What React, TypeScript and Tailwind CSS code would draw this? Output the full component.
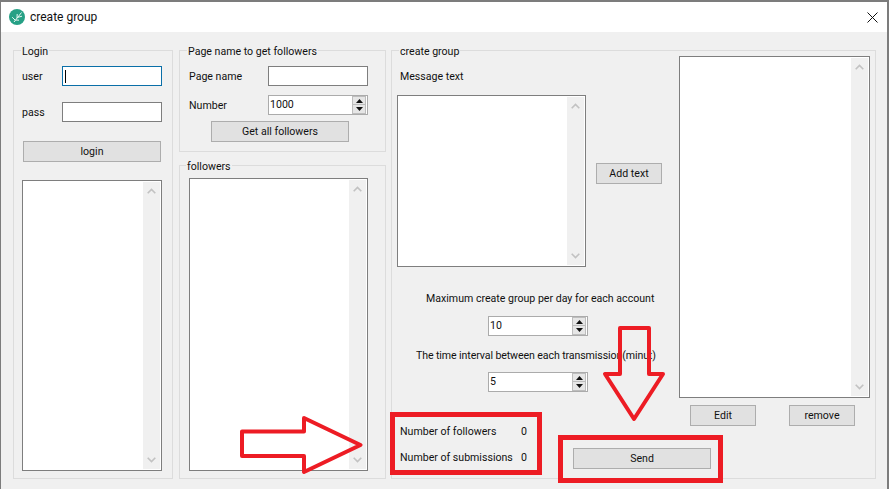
import React from "react";

const FONT = "font-['Roboto','Liberation_Sans',Arial,sans-serif]";

function Chevron({ up }: { up?: boolean }) {
  return (
    <svg width="9" height="6" viewBox="0 0 9 6" fill="none" stroke="#c2c2c2" strokeWidth="1.6">
      <path d={up ? "M0.7 5.2 L4.5 1.4 L8.3 5.2" : "M0.7 0.8 L4.5 4.6 L8.3 0.8"} />
    </svg>
  );
}

function ListBox({ className }: { className: string }) {
  return (
    <div className={`flex justify-end border border-[#7e7e7e] bg-white pt-px pr-px pb-px ${className}`}>
      <div className="flex w-[17px] flex-col items-center justify-between bg-[#f0f0f0] pt-[6px] pb-[6px]">
        <Chevron up />
        <Chevron />
      </div>
    </div>
  );
}

function Btn({ label, className }: { label: string; className: string }) {
  return (
    <div className={`flex h-[21px] shrink-0 items-center justify-center border border-[#adadad] bg-[#e1e1e1] pt-px text-[#111] ${className}`}>
      {label}
    </div>
  );
}

function TextInput({ focused }: { focused?: boolean }) {
  return (
    <div className={`flex h-[20px] w-[100px] shrink-0 items-center border bg-white pl-[2px] ${focused ? "border-[#0a6fa8]" : "border-[#7e7e7e]"}`}>
      {focused && <div className="h-[13px] w-px bg-black" />}
    </div>
  );
}

function Spinner({ value }: { value: string }) {
  return (
    <div className="flex h-[20px] w-[100px] shrink-0 items-center justify-between border border-[#ababab] bg-white pr-[1px] pl-[1px] text-[#111]">
      <span>{value}</span>
      <div className="flex w-[14px] flex-col">
        <div className="flex h-[9px] items-center justify-center border border-[#bdbdbd] bg-[#e6e6e6]">
          <svg width="7" height="4" viewBox="0 0 7 4"><path d="M3.5 0 L7 4 L0 4 Z" fill="#111" /></svg>
        </div>
        <div className="flex h-[9px] items-center justify-center border border-t-0 border-[#bdbdbd] bg-[#e6e6e6]">
          <svg width="7" height="4" viewBox="0 0 7 4"><path d="M0 0 L7 0 L3.5 4 Z" fill="#111" /></svg>
        </div>
      </div>
    </div>
  );
}

function Legend({ text, className }: { text: string; className: string }) {
  return (
    <span className={`absolute top-[-6px] bg-[#f0f0f0] px-[1px] leading-[13px] text-[#111] ${className}`}>{text}</span>
  );
}

function Label({ text, className = "" }: { text: string; className?: string }) {
  return <span className={`pt-px leading-[13px] text-[#111] ${className}`}>{text}</span>;
}

export default function App() {
  return (
    <div className={`relative flex h-[489px] w-[889px] flex-col overflow-hidden border-t-2 border-r-2 border-l border-[#7c7c7c] bg-[#f0f0f0] text-[10.6px] ${FONT}`}>
      <div className="flex h-[30px] shrink-0 items-center bg-white pr-[9px] pl-[8px]">
        <svg width="16" height="16" viewBox="0 0 16 16">
          <circle cx="8" cy="8" r="8" fill="#26a085" />
          <path d="M5 13 L12.5 3.5 M8 9.2 L8.2 5 M8.6 8.4 L13 7.2 M6.3 11.3 L3.2 8.2 M6.6 11 L10 11.2" stroke="#e8f7f2" strokeWidth="1" fill="none" />
        </svg>
        <span className="ml-[5px] text-[12px] text-[#111]">create group</span>
        <svg className="ml-auto" width="11" height="11" viewBox="0 0 11 11" stroke="#111" strokeWidth="1">
          <path d="M0.5 0.5 L10.5 10.5 M10.5 0.5 L0.5 10.5" />
        </svg>
      </div>

      <div className="flex min-h-0 flex-1 pt-[18px] pb-[10px] pl-[12px]">
        <div className="relative flex w-[160px] shrink-0 flex-col border border-[#dcdcdc] pt-[15px] pr-[9px] pb-[7px] pl-[8px]">
          <Legend text="Login" className="left-[7px]" />
          <div className="flex items-center">
            <Label text="user" className="w-[40px]" />
            <TextInput focused />
          </div>
          <div className="mt-[16px] flex items-center">
            <Label text="pass" className="w-[40px]" />
            <TextInput />
          </div>
          <Btn label="login" className="mt-[19px] ml-px w-[138px]" />
          <ListBox className="mt-[18px] min-h-0 w-[140px] flex-1" />
        </div>

        <div className="ml-[6px] flex w-[207px] shrink-0 flex-col gap-[13px]">
          <div className="relative h-[102px] shrink-0 border border-[#dcdcdc] pt-[15px] pl-[9px]">
            <Legend text="Page name to get followers" className="left-[7px]" />
            <div className="flex items-center">
              <Label text="Page name" className="w-[79px]" />
              <TextInput />
            </div>
            <div className="mt-[9px] flex items-center">
              <Label text="Number" className="w-[79px]" />
              <Spinner value="1000" />
            </div>
            <Btn label="Get all followers" className="mt-[6px] ml-[22px] w-[138px]" />
          </div>
          <div className="relative flex min-h-0 flex-1 flex-col border border-[#dcdcdc] pt-[12px] pb-[7px] pl-[9px]">
            <Legend text="followers" className="left-[6px]" />
            <ListBox className="min-h-0 w-[179px] flex-1" />
          </div>
        </div>

        <div className="relative ml-[5px] flex w-[485px] shrink-0 border border-[#dcdcdc] pl-[5px]">
          <Legend text="create group" className="left-[7px]" />
          <div className="flex w-[282px] shrink-0 flex-col">
            <Label text="Message text" className="mt-[18px] ml-[3px]" />
            <div className="mt-[12px] flex">
              <ListBox className="h-[172px] w-[189px] shrink-0" />
              <Btn label="Add text" className="mt-[68px] ml-[10px] w-[66px]" />
            </div>
            <Label text="Maximum create group per day for each account" className="mt-[24px] ml-[29px] whitespace-nowrap" />
            <div className="mt-[11px] ml-[91px]"><Spinner value="10" /></div>
            <Label text="The time interval between each transmission(minut)" className="mt-[12px] ml-[19px] whitespace-nowrap tracking-[-0.1px]" />
            <div className="mt-[10px] ml-[91px]"><Spinner value="5" /></div>
            <div className="mt-[32px] ml-[3px] flex items-start">
              <div className="grid w-[173px] shrink-0 grid-cols-[121px_auto] gap-y-[12px]">
                <Label text="Number of followers" />
                <Label text="0" />
                <Label text="Number of submissions" />
                <Label text="0" />
              </div>
              <Btn label="Send" className="mt-[24px] w-[138px]" />
            </div>
          </div>
          <div className="flex w-[191px] shrink-0 flex-col pt-[5px]">
            <ListBox className="h-[342px] w-[191px]" />
            <div className="mt-[7px] ml-[11px] flex gap-[33px]">
              <Btn label="Edit" className="w-[66px]" />
              <Btn label="remove" className="w-[66px]" />
            </div>
          </div>
        </div>
      </div>

      {/* Red annotations drawn over the screenshot */}
      <div className="absolute top-[410px] left-[389px] h-[63px] w-[152px] border-[5px] border-[#ed1c24]" />
      <div className="absolute top-[433px] left-[557px] h-[48px] w-[165px] border-[5px] border-[#ed1c24]" />
      <svg className="pointer-events-none absolute top-[-2px] left-[-1px]" width="889" height="489" fill="none" stroke="#ed1c24" strokeWidth="4" strokeLinejoin="round">
        <path d="M242 431.5 H304 V418 L360.5 445 L304 472 V456 H242 Z" />
        <path d="M620 328 H649 V374 H663 L634 419 L605 374 H620 Z" />
      </svg>
    </div>
  );
}
